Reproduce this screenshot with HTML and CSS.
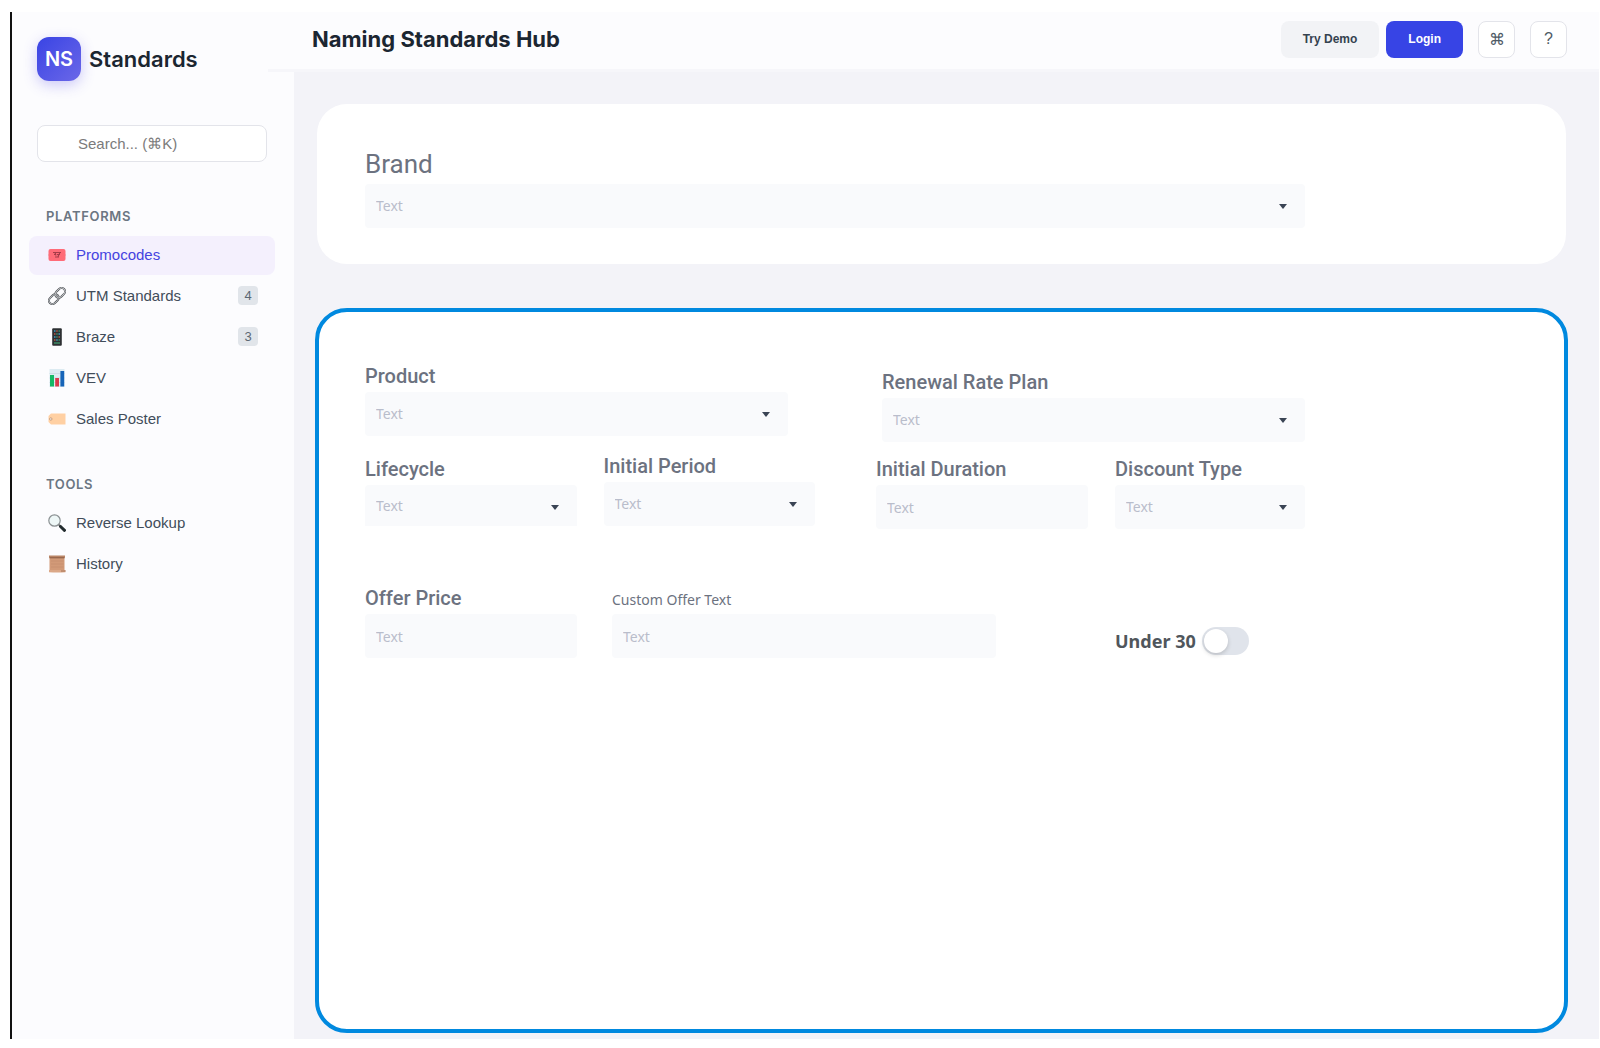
FILE: index.html
```html
<!DOCTYPE html>
<html lang="en">
<head>
<meta charset="utf-8">
<meta name="viewport" content="width=device-width, initial-scale=1">
<title>Naming Standards Hub</title>
<link rel="stylesheet" href="styles.css">
</head>
<body>
<div class="app">
  <aside class="sidebar">
    <div class="brand"><span class="brand-mark">NS</span><span class="brand-name">Standards</span></div>
    <input class="search" type="search" placeholder="Search... (⌘K)" aria-label="Search">
    <nav class="nav" aria-label="Platforms">
      <h2 class="nav-title">PLATFORMS</h2>
      <a class="nav-item active" href="#promocodes">
        <svg class="nav-icon" viewBox="0 0 18 18"><rect x=".5" y="3" width="17" height="12" rx="2" fill="#ff6b78"/><path d="M.5 8v2M17.500 8v2" stroke="#f0a0aa"/><path d="M5 6.500h8M6 8.500h2m1 0h3M7 11h4M7 6.500l1 3m4-3-2 4" stroke="#a63c49" stroke-width="1.100" fill="none"/></svg>
        <span class="nav-label">Promocodes</span></a>
      <a class="nav-item" href="#utm">
        <svg class="nav-icon" viewBox="0 0 18 18"><g transform="rotate(-45 9 9)" fill="none"><rect x="-1" y="5.500" width="11" height="7" rx="3.500" stroke="#55585c" stroke-width="2"/><rect x="-1" y="5.500" width="11" height="7" rx="3.500" stroke="#c9ccd0" stroke-width=".8"/><rect x="8" y="5.500" width="11" height="7" rx="3.500" stroke="#55585c" stroke-width="2"/><rect x="8" y="5.500" width="11" height="7" rx="3.500" stroke="#dcdee0" stroke-width=".8"/></g></svg>
        <span class="nav-label">UTM Standards</span><span class="badge">4</span></a>
      <a class="nav-item" href="#braze">
        <svg class="nav-icon" viewBox="0 0 18 18"><rect x="4.200" y=".2" width="9.600" height="17.600" rx="1" fill="#2d3033"/><path d="M6 3h1.500M6 9h1.500M10.500 6H12M8.200 12h1.500" stroke="#3f9fc4" stroke-width="1.400"/><path d="M8.200 3h1.500M6 6h1.500M10.500 9H12M6 12h1.500" stroke="#b85a4a" stroke-width="1.400"/><path d="M10.500 3H12M8.200 6h1.500M8.200 9h1.500M10.500 12H12M6 15h6" stroke="#3e8a66" stroke-width="1.400"/></svg>
        <span class="nav-label">Braze</span><span class="badge">3</span></a>
      <a class="nav-item" href="#vev">
        <svg class="nav-icon" viewBox="0 0 18 18"><rect x="1.500" width="15" height="18" fill="#dcebf2"/><path d="M1.500 4.500h15m-15 4.500h15m-15 4.500h15" stroke="#c1d3dd" stroke-width=".6"/><path d="M2 6h4v11.500H2z" fill="#14b866"/><path d="M7.200 9h3.800v8.500H7.200z" fill="#d83a4c"/><path d="M12.400 2h3.800v15.500h-3.800z" fill="#1764b8"/></svg>
        <span class="nav-label">VEV</span></a>
      <a class="nav-item" href="#poster">
        <svg class="nav-icon" viewBox="0 0 18 18"><path d="M3 3.500h14.500v11H3L.5 12V6z" fill="#ffd0a3"/><circle cx="2.800" cy="9" r="1.200" fill="#fff" stroke="#b98a68" stroke-width=".8"/></svg>
        <span class="nav-label">Sales Poster</span></a>
    </nav>
    <nav class="nav" aria-label="Tools">
      <h2 class="nav-title">TOOLS</h2>
      <a class="nav-item" href="#lookup">
        <svg class="nav-icon" viewBox="0 0 18 18"><path d="m10.500 10.500 2.500 2" stroke="#777" stroke-width="1.800"/><path d="m12.500 12.500 4 3.800" stroke="#222b2e" stroke-width="3" stroke-linecap="round"/><circle cx="6.500" cy="6.500" r="5.700" fill="#eef7f7" stroke="#8a9092" stroke-width="1.200"/></svg>
        <span class="nav-label">Reverse Lookup</span></a>
      <a class="nav-item" href="#history">
        <svg class="nav-icon" viewBox="0 0 18 18"><path d="M1.500 2h15v14h-15z" fill="#d29a78"/><path d="M1 .5h16v2.200H1z" fill="#b98566"/><path d="M1.500 2.800h15" stroke="#7b4c37" stroke-width=".8"/><path d="M1 15h16.500v2.200q-8 .8-16.500 0z" fill="#dba888"/><path d="M3 6h12.500M3 9h12.500M3 12h12.500" stroke="#c58c6b" stroke-width=".6"/><path d="M13 16h4.500" stroke="#9a674c" stroke-width=".8"/></svg>
        <span class="nav-label">History</span></a>
    </nav>
  </aside>
  <div class="content">
    <header class="topbar">
      <h1 class="title">Naming Standards Hub</h1>
      <div class="actions">
        <div class="auth">
          <button class="btn" type="button">Try Demo</button>
          <button class="btn primary" type="button">Login</button>
        </div>
        <button class="btn icon" type="button" aria-label="Shortcuts">⌘</button>
        <button class="btn icon" type="button" aria-label="Help">?</button>
      </div>
    </header>
    <main class="main">
      <section class="panel">
        <div class="field form">
          <label class="label large" for="brand">Brand</label>
          <div class="select"><select class="control" id="brand"><option>Text</option></select></div>
        </div>
      </section>
      <form class="panel selected">
        <div class="form form-grid">
          <div class="column">
            <div class="field product">
              <label class="label" for="product">Product</label>
              <div class="select"><select class="control" id="product"><option>Text</option></select></div>
            </div>
            <div class="pair">
              <div class="field">
                <label class="label" for="lifecycle">Lifecycle</label>
                <div class="select"><select class="control clipped" id="lifecycle"><option>Text</option></select></div>
              </div>
              <div class="field">
                <label class="label" for="period">Initial Period</label>
                <div class="select"><select class="control" id="period"><option>Text</option></select></div>
              </div>
            </div>
          </div>
          <div class="column lowered">
            <div class="field renewal">
              <label class="label" for="plan">Renewal Rate Plan</label>
              <div class="select"><select class="control" id="plan"><option>Text</option></select></div>
            </div>
            <div class="pair uneven">
              <div class="field">
                <label class="label" for="duration">Initial Duration</label>
                <input class="control" id="duration" type="text" placeholder="Text">
              </div>
              <div class="field">
                <label class="label" for="discount">Discount Type</label>
                <div class="select"><select class="control" id="discount"><option>Text</option></select></div>
              </div>
            </div>
          </div>
        </div>
        <div class="form offer">
          <div class="field price">
            <label class="label" for="price">Offer Price</label>
            <input class="control" id="price" type="text" placeholder="Text">
          </div>
          <div class="field custom">
            <label class="label small" for="custom">Custom Offer Text</label>
            <input class="control" id="custom" type="text" placeholder="Text">
          </div>
          <label class="toggle">Under 30 <input class="switch" type="checkbox" role="switch"></label>
        </div>
      </form>
    </main>
  </div>
</div>
</body>
</html>
```
FILE: styles.css
```css
* { box-sizing: border-box; }

body {
  margin: 0;
  min-height: 100vh;
  padding: 12px 1px 9px 10px;
  display: flex;
  background: #fff;
  font-family: "Liberation Sans", Arial, sans-serif;
  color: #414d5a;
}

h1, h2 { margin: 0; }
button, input, select { font: inherit; }

.app {
  flex: 1;
  display: flex;
  border-left: 2px solid #111;
  background: #f3f3f8;
}

/* Sidebar */
.sidebar {
  width: 282px;
  flex: none;
  padding: 25px 19px 25px 17px;
  background: #fcfcfe;
}

.brand {
  display: flex;
  align-items: center;
  gap: 8px;
  padding-left: 8px;
}

.brand-mark {
  width: 44px;
  height: 44px;
  border-radius: 12px;
  display: grid;
  place-items: center;
  background: linear-gradient(135deg, #3944e4, #6b67e8);
  box-shadow: 0 4px 14px rgba(79, 70, 229, .28);
  color: #fff;
  font: 600 20px/24px Inter, sans-serif;
}

.brand-name {
  font: 600 22px/28px Inter, sans-serif;
  color: #1b2631;
}

.search {
  display: block;
  width: calc(100% - 16px);
  height: 37px;
  margin: 44px 8px 46px;
  padding: 0 12px 0 40px;
  border: 1px solid #e3e4ea;
  border-radius: 8px;
  background: #fff;
  font-size: 15px;
  outline: none;
}

.search::placeholder { color: #7b7b7b; }

.nav {
  display: flex;
  flex-direction: column;
  gap: 2px;
}

.nav + .nav { margin-top: 37px; }

.nav-title {
  margin-bottom: 10px;
  padding-left: 17px;
  font: 600 13px/16px Inter, sans-serif;
  letter-spacing: .05em;
  color: #6b7682;
}

.nav-item {
  display: flex;
  align-items: center;
  gap: 10px;
  height: 39px;
  padding: 0 17px 2px 19px;
  border-radius: 8px;
  color: #414d5a;
  font-size: 15px;
  text-decoration: none;
}

.nav-item.active {
  background: #f4f0fd;
  color: #4543e0;
}

.nav-icon {
  width: 18px;
  height: 18px;
  flex: none;
}

.nav-label { flex: 1; }

.badge {
  min-width: 20px;
  border-radius: 4px;
  background: #e1e5ea;
  color: #5c6873;
  font-size: 13px;
  line-height: 19px;
  text-align: center;
}

/* Header */
.content {
  flex: 1;
  min-width: 0;
  display: flex;
  flex-direction: column;
}

.topbar {
  display: flex;
  align-items: center;
  justify-content: space-between;
  min-height: 60px;
  margin-left: -26px;
  padding: 0 32px 3px 44px;
  border-bottom: 3px solid #f6f6fa;
  background: #fcfcfe;
}

.title {
  font: 700 22px/28px Inter, sans-serif;
  color: #1b2631;
}

.actions { display: flex; gap: 15px; }
.auth { display: flex; gap: 7px; }

.btn {
  height: 37px;
  padding: 0 22px;
  border: 0;
  border-radius: 8px;
  background: #f2f3f6;
  color: #35424f;
  font-size: 12px;
  font-weight: 700;
}

.btn.primary {
  background: #3744e5;
  color: #fff;
}

.btn.icon {
  width: 37px;
  padding: 0;
  border: 1px solid #e3e4ea;
  background: #fff;
  color: #4e5a65;
  font-size: 16px;
  font-weight: 400;
}

/* Panels */
.main {
  flex: 1;
  display: flex;
  flex-direction: column;
  gap: 44px;
  padding: 32px 31px 6px 21px;
}

.panel {
  margin: 0 2px;
  padding: 44px 48px 36px;
  border-radius: 30px;
  background: #fff;
}

.panel.selected {
  flex: 1;
  margin: 0;
  padding: 52px 46px;
  border: 4px solid #0089df;
  border-radius: 32px;
}

.form { max-width: 940px; }

.form-grid {
  display: grid;
  grid-template-columns: 450fr 429fr;
  gap: 61px;
}

.column {
  display: flex;
  flex-direction: column;
  gap: 18px;
}

.column.lowered {
  gap: 15px;
  padding-top: 6px;
}

.product { margin-right: 27px; }
.renewal { margin-left: 6px; }

.pair {
  display: grid;
  grid-template-columns: 1fr 1fr;
  align-items: end;
  gap: 27px;
}

.pair.uneven { grid-template-columns: 212fr 190fr; }

.offer {
  display: flex;
  align-items: flex-end;
  gap: 35px;
  margin-top: 57px;
}

.price { width: 212px; }
.custom { width: 384px; }

/* Fields */
.field {
  display: flex;
  flex-direction: column;
  gap: 4px;
}

.label {
  font: 500 20px/24px Roboto, sans-serif;
  color: #6c7280;
}

.label.large {
  font-size: 26px;
  line-height: 32px;
  font-weight: 400;
}

.label.small {
  font: 400 14px/20px "Noto Sans", sans-serif;
}

.control {
  display: block;
  width: 100%;
  height: 44px;
  padding: 0 11px;
  border: 0;
  border-radius: 4px;
  appearance: none;
  outline: none;
  background: #f9fafc;
  color: #b9bdcb;
  font: 400 14px/20px "Noto Sans", sans-serif;
}

.control::placeholder { color: #b9bdcb; }

.control.clipped {
  height: 41px;
  border-radius: 4px 4px 0 0;
}

.select { position: relative; }

.select::after {
  content: "";
  position: absolute;
  top: 20px;
  right: 18px;
  border: 4px solid transparent;
  border-top: 5px solid #3a4454;
  border-bottom: 0;
  pointer-events: none;
}

.toggle {
  display: flex;
  align-items: center;
  gap: 6px;
  width: 190px;
  height: 34px;
  margin-left: auto;
  font: 700 18px/24px "Noto Sans", sans-serif;
  color: #50565c;
}

.switch {
  width: 47px;
  height: 28px;
  margin: 0;
  padding: 2px;
  appearance: none;
  border-radius: 14px;
  background: #e0e4eb;
}

.switch::before {
  content: "";
  display: block;
  width: 24px;
  height: 24px;
  border-radius: 50%;
  background: #fff;
  box-shadow: 0 2px 4px rgba(39, 39, 39, .2);
}

.switch:checked { background: #3744e5; }
.switch:checked::before { margin-left: auto; }
```
